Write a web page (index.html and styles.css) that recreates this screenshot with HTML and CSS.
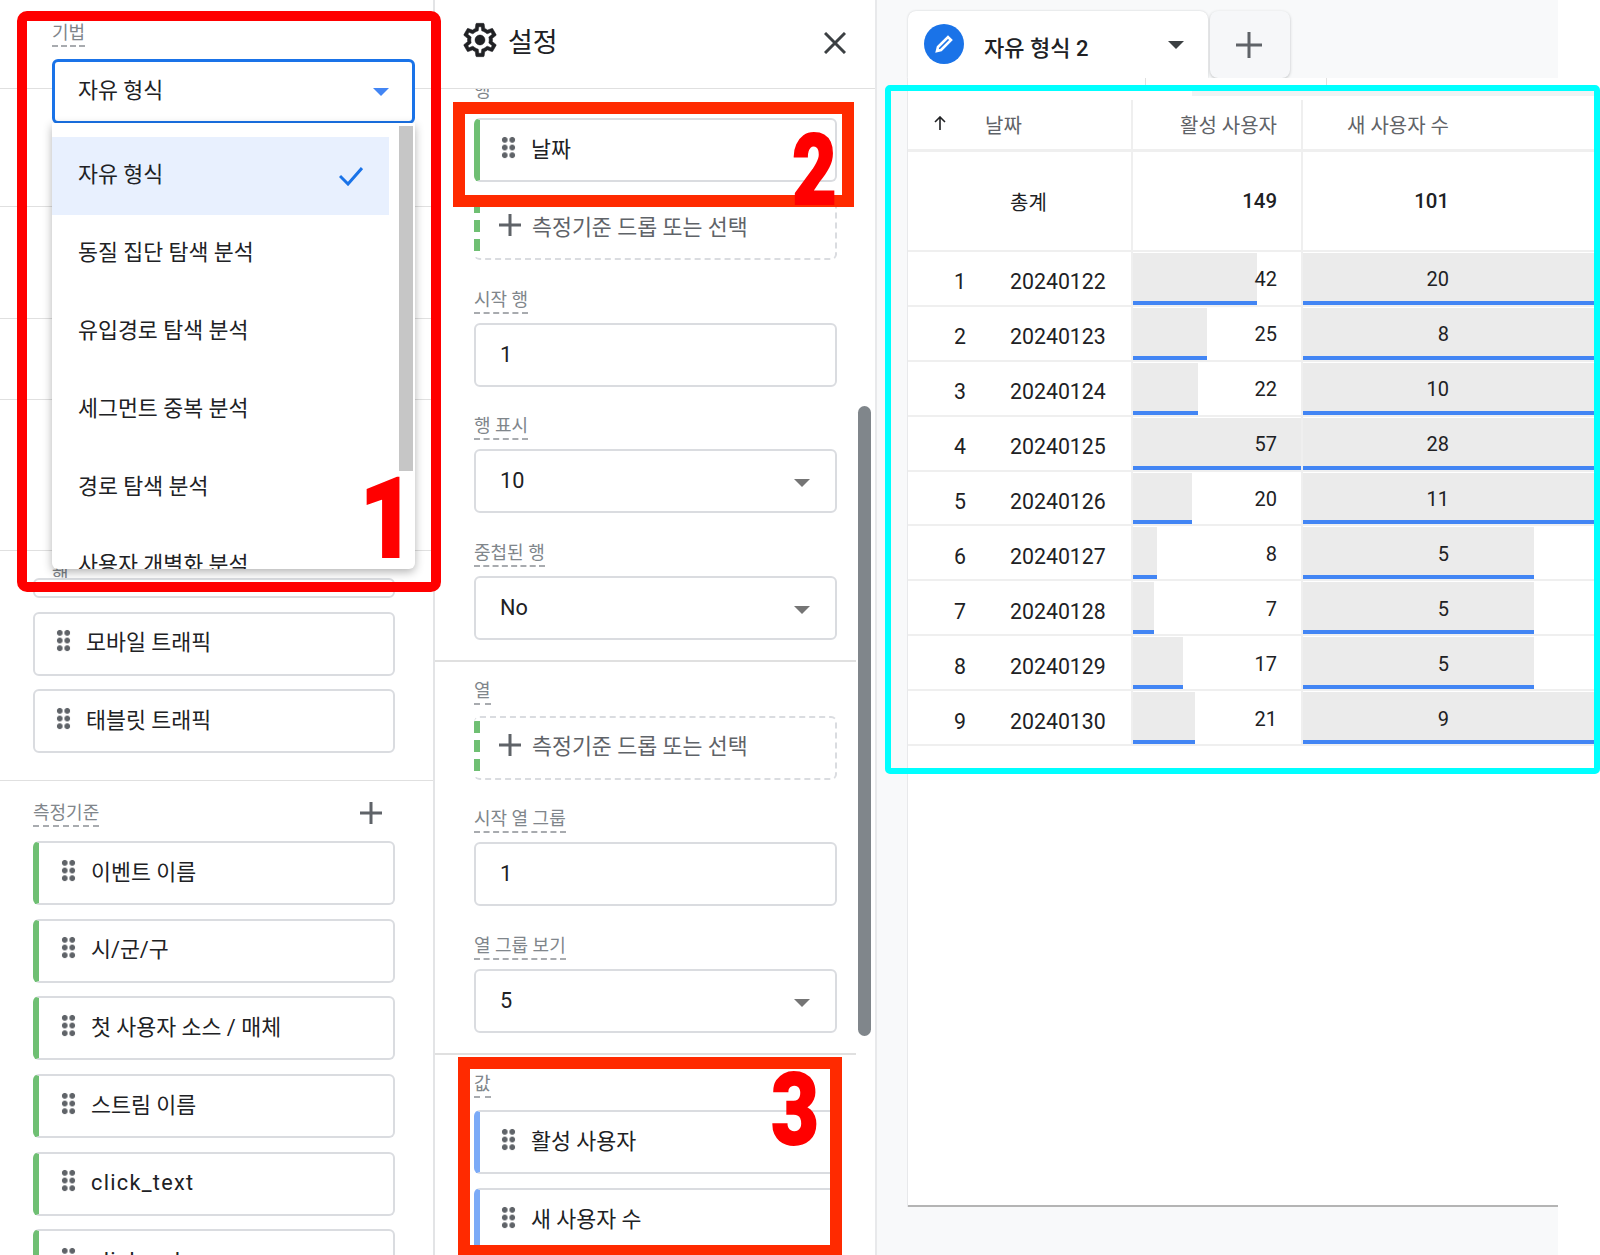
FILE: index.html
```html
<!DOCTYPE html>
<html lang="ko">
  <head>
    <meta charset="UTF-8" />
    <title>자유 형식</title>
    <link rel="stylesheet" href="styles.css">
  </head>
  <body>
    <div class="vars">
      <div class="sec sec-1"></div>
      <div class="sec sec-2"></div>
      <div class="sec sec-3"></div>
      <div class="sec sec-4"></div>
      <div class="sec sec-5"></div>
      <div class="sec sec-rows">
        <div class="lbl under">행</div>
        <div class="chips">
          <div class="chip chip-cut"></div>
          <div class="chip"><i class="dots"></i>모바일 트래픽</div>
          <div class="chip"><i class="dots"></i>태블릿 트래픽</div>
        </div>
      </div>
      <div class="sec-metrics">
        <div class="metrics-head">
          <span class="lbl">측정기준</span>
          <svg class="plus-sm" viewBox="0 0 22 22"><path d="M11 0v22M0 11h22" /></svg>
        </div>
        <div class="chips">
          <div class="chip green"><i class="dots"></i>이벤트 이름</div>
          <div class="chip green"><i class="dots"></i>시/군/구</div>
          <div class="chip green"><i class="dots"></i>첫 사용자 소스 / 매체</div>
          <div class="chip green"><i class="dots"></i>스트림 이름</div>
          <div class="chip green latin"><i class="dots"></i>click_text</div>
          <div class="chip green latin"><i class="dots"></i>click_url</div>
        </div>
      </div>

      <div class="picker">
        <div class="lbl">기법</div>
        <div class="select-open">자유 형식<b class="caret blue"></b></div>
        <div class="menu">
          <div class="menu-item on">자유 형식
            <svg class="check" viewBox="0 0 24 20"><path d="M1 10l8 8L23 2" /></svg>
          </div>
          <div class="menu-item">동질 집단 탐색 분석</div>
          <div class="menu-item">유입경로 탐색 분석</div>
          <div class="menu-item">세그먼트 중복 분석</div>
          <div class="menu-item">경로 탐색 분석</div>
          <div class="menu-item">사용자 개별화 분석</div>
          <div class="menu-thumb"></div>
        </div>
      </div>
    </div>

    <div class="settings">
      <div class="set-head">
        <svg class="gear" viewBox="0 0 24 24"><path fill-rule="evenodd" d="M19.43 12.98c.04-.32.07-.64.07-.98s-.03-.66-.07-.98l2.11-1.65c.19-.15.24-.42.12-.64l-2-3.46c-.12-.22-.39-.3-.61-.22l-2.49 1c-.52-.4-1.08-.73-1.69-.98l-.38-2.65C14.46 2.18 14.25 2 14 2h-4c-.25 0-.46.18-.49.42l-.38 2.65c-.61.25-1.17.59-1.69.98l-2.49-1c-.23-.09-.49 0-.61.22l-2 3.46c-.13.22-.07.49.12.64l2.11 1.65c-.04.32-.07.65-.07.98s.03.66.07.98l-2.11 1.65c-.19.15-.24.42-.12.64l2 3.46c.12.22.39.3.61.22l2.49-1c.52.4 1.08.73 1.69.98l.38 2.65c.03.24.24.42.49.42h4c.25 0 .46-.18.49-.42l.38-2.65c.61-.25 1.17-.59 1.69-.98l2.49 1c.23.09.49 0 .61-.22l2-3.46c.12-.22.07-.49-.12-.64l-2.11-1.65zM17.45 11.27c.04.31.05.52.05.73s-.02.43-.05.73l-.14 1.13.89.7 1.08.84-.7 1.21-1.27-.51-1.04-.42-.9.68c-.43.32-.84.56-1.25.73l-1.06.43-.16 1.13-.2 1.35h-1.4l-.19-1.35-.16-1.13-1.06-.43c-.43-.18-.83-.41-1.23-.71l-.91-.7-1.06.43-1.27.51-.7-1.21 1.08-.84.89-.7-.14-1.13c-.03-.31-.05-.54-.05-.74s.02-.43.05-.73l.14-1.13-.89-.7-1.08-.84.7-1.21 1.27.51 1.04.42.9-.68c.43-.32.84-.56 1.25-.73l1.06-.43.16-1.13.2-1.35h1.39l.19 1.35.16 1.13 1.06.43c.43.18.83.41 1.23.71l.91.7 1.06-.43 1.27-.51.7 1.21-1.07.85-.89.7.14 1.13zM12 9c-1.66 0-3 1.34-3 3s1.34 3 3 3 3-1.34 3-3-1.34-3-3-3z" /></svg>
        <span class="set-title">설정</span>
        <svg class="close" viewBox="0 0 22 22"><path d="M1 1l20 20M21 1L1 21" /></svg>
      </div>
      <div class="set-body">
        <div class="lbl clip">행</div>
        <div class="chip green"><i class="dots"></i>날짜</div>
        <div class="drop"><svg class="plus" viewBox="0 0 22 22"><path d="M11 0v22M0 11h22" /></svg>측정기준 드롭 또는 선택</div>
        <div class="lbl field-lbl">시작 행</div>
        <div class="field">1</div>
        <div class="lbl field-lbl">행 표시</div>
        <div class="field">10<b class="caret"></b></div>
        <div class="lbl field-lbl">중첩된 행</div>
        <div class="field">No<b class="caret"></b></div>
        <div class="rule rule-a"></div>
        <div class="lbl short">열</div>
        <div class="drop"><svg class="plus" viewBox="0 0 22 22"><path d="M11 0v22M0 11h22" /></svg>측정기준 드롭 또는 선택</div>
        <div class="lbl field-lbl">시작 열 그룹</div>
        <div class="field">1</div>
        <div class="lbl field-lbl">열 그룹 보기</div>
        <div class="field">5<b class="caret"></b></div>
        <div class="rule rule-b"></div>
        <div class="lbl val-lbl">값</div>
        <div class="chip blue"><i class="dots"></i>활성 사용자</div>
        <div class="chip blue"><i class="dots"></i>새 사용자 수</div>
      </div>
      <div class="set-thumb"></div>
    </div>

    <div class="report">
      <div class="tabs">
        <div class="tab">
          <span class="pen"><svg viewBox="0 0 24 24"><path d="M5 19l1-4L16 5l3 3L9 18z" /></svg></span>
          <span class="tab-name">자유 형식 2</span>
          <b class="caret dark"></b>
        </div>
        <div class="tab-add"><svg viewBox="0 0 26 26"><path d="M13 0v26M0 13h26" /></svg></div>
      </div>
      <div class="card">
        <div class="strip"></div>
        <div class="tbl">
          <div class="row head">
            <div class="c-idx"><svg class="up" viewBox="0 0 12 14"><path d="M6 14V1M1 6l5-5 5 5" /></svg></div>
            <div class="c-date">날짜</div>
            <div class="c-a">활성 사용자</div>
            <div class="c-b">새 사용자 수</div>
          </div>
          <div class="row total">
            <div class="c-idx"></div>
            <div class="c-date">총계</div>
            <div class="c-a">149</div>
            <div class="c-b">101</div>
          </div>
          <div class="row data">
            <div class="c-idx">1</div><div class="c-date">20240122</div>
            <div class="c-a"><i class="bar" style="width:73.7%"></i><span>42</span></div>
            <div class="c-b"><i class="bar" style="width:100%"></i><span>20</span></div>
          </div>
          <div class="row data">
            <div class="c-idx">2</div><div class="c-date">20240123</div>
            <div class="c-a"><i class="bar" style="width:43.9%"></i><span>25</span></div>
            <div class="c-b"><i class="bar" style="width:100%"></i><span>8</span></div>
          </div>
          <div class="row data">
            <div class="c-idx">3</div><div class="c-date">20240124</div>
            <div class="c-a"><i class="bar" style="width:38.6%"></i><span>22</span></div>
            <div class="c-b"><i class="bar" style="width:100%"></i><span>10</span></div>
          </div>
          <div class="row data">
            <div class="c-idx">4</div><div class="c-date">20240125</div>
            <div class="c-a"><i class="bar" style="width:100%"></i><span>57</span></div>
            <div class="c-b"><i class="bar" style="width:100%"></i><span>28</span></div>
          </div>
          <div class="row data">
            <div class="c-idx">5</div><div class="c-date">20240126</div>
            <div class="c-a"><i class="bar" style="width:35.1%"></i><span>20</span></div>
            <div class="c-b"><i class="bar" style="width:100%"></i><span>11</span></div>
          </div>
          <div class="row data">
            <div class="c-idx">6</div><div class="c-date">20240127</div>
            <div class="c-a"><i class="bar" style="width:14%"></i><span>8</span></div>
            <div class="c-b"><i class="bar" style="width:77.7%"></i><span>5</span></div>
          </div>
          <div class="row data">
            <div class="c-idx">7</div><div class="c-date">20240128</div>
            <div class="c-a"><i class="bar" style="width:12.3%"></i><span>7</span></div>
            <div class="c-b"><i class="bar" style="width:77.7%"></i><span>5</span></div>
          </div>
          <div class="row data">
            <div class="c-idx">8</div><div class="c-date">20240129</div>
            <div class="c-a"><i class="bar" style="width:29.8%"></i><span>17</span></div>
            <div class="c-b"><i class="bar" style="width:77.7%"></i><span>5</span></div>
          </div>
          <div class="row data">
            <div class="c-idx">9</div><div class="c-date">20240130</div>
            <div class="c-a"><i class="bar" style="width:36.8%"></i><span>21</span></div>
            <div class="c-b"><i class="bar" style="width:100%"></i><span>9</span></div>
          </div>
        </div>
      </div>
    </div>

    <!-- 주석 박스 -->
    <div class="mark mark-1"></div>
    <div class="mark-2"></div>
    <div class="mark-3"></div>
    <div class="mark-t"></div>
    <span class="num num-1">1</span>
    <span class="num num-2">2</span>
    <span class="num num-3">3</span>
  </body>
</html>
```

FILE: styles.css
```css
* {
  box-sizing: border-box;
}
html,
body {
  margin: 0;
  height: 100%;
}
body {
  position: relative;
  width: 1600px;
  height: 1255px;
  overflow: hidden;
  display: flex;
  background: #fff;
  color: #202124;
  font-family: Roboto, "Noto Sans CJK KR", sans-serif;
  font-size: 21.7px;
}

/* 왼쪽 패널 */
.vars {
  position: relative;
  width: 435px;
  flex: none;
  border-right: 2px solid #e3e4e6;
}
.sec {
  border-bottom: 1px solid #e0e0e0;
}
.sec-1 {
  height: 89px;
}
.sec-2 {
  height: 118px;
}
.sec-3 {
  height: 112px;
}
.sec-4 {
  height: 81px;
}
.sec-5 {
  height: 151px;
}
.sec-rows {
  height: 230px;
  padding: 15px 0 0 52px;
}
.sec-rows .chips {
  margin: -13px 0 0 -19px;
}
.sec-rows .chip-cut {
  height: 20px;
  padding: 0;
}
.under {
  border: 0;
}
.sec-metrics {
  padding: 0 38px 0 33px;
}
.metrics-head {
  display: flex;
  justify-content: space-between;
  align-items: center;
  height: 60px;
  padding-right: 13px;
}
.metrics-head .lbl {
  margin-top: 6px;
}
.chips {
  display: flex;
  flex-direction: column;
  gap: 13.7px;
}
.lbl {
  display: table;
  font-size: 18px;
  line-height: 22px;
  color: #80868b;
  border-bottom: 2px dashed #a8abaf;
  padding-bottom: 1px;
}
.chip {
  display: flex;
  align-items: center;
  flex: none;
  width: 362px;
  height: 64px;
  padding: 0 0 6px 21px;
  border: 2px solid #dadce0;
  border-radius: 6px;
  background: #fff;
}
.chip.green {
  border-left: 6px solid #6fbf73;
  padding-left: 22px;
}
.chip.blue {
  border-left: 6px solid #7baaf7;
  padding-left: 22px;
}
.latin {
  letter-spacing: 1.3px;
  padding-bottom: 2px;
}
.latin .dots {
  margin-top: -4px;
}
.dots {
  display: block;
  flex: none;
  width: 15px;
  height: 23px;
  margin-right: 15px;
  background-image: radial-gradient(circle at center, #5f6368 2.6px, transparent 3.1px);
  background-size: 7.5px 7.7px;
}

/* 기법 드롭다운 */
.picker {
  position: absolute;
  left: 52px;
  top: 22px;
  width: 363px;
}
.picker .lbl {
  margin-bottom: 12px;
}
.select-open {
  position: relative;
  height: 65px;
  display: flex;
  align-items: center;
  padding: 0 0 6px 23px;
  border: 3px solid #1a73e8;
  border-radius: 6px;
  background: #fff;
}
.caret {
  position: absolute;
  right: 24px;
  top: 50%;
  margin-top: -2px;
  border-top: 8px solid #757575;
  border-left: 8px solid transparent;
  border-right: 8px solid transparent;
}
.caret.blue {
  border-top-color: #4285f4;
  margin-top: -4px;
  right: 23px;
}
.menu {
  position: relative;
  height: 446px;
  margin-top: -1px;
  padding-top: 14px;
  overflow: hidden;
  background: #fff;
  border-radius: 0 0 6px 6px;
  box-shadow: 0 3px 10px rgba(0, 0, 0, 0.3);
}
.menu-item {
  position: relative;
  display: flex;
  align-items: center;
  flex: none;
  width: 337px;
  height: 78px;
  padding: 0 0 7px 26px;
}
.menu-item.on {
  background: #e8f0fe;
}
.check {
  position: absolute;
  right: 26px;
  top: 29px;
  width: 24px;
  height: 20px;
  fill: none;
  stroke: #1a73e8;
  stroke-width: 3;
}
.menu-thumb {
  position: absolute;
  right: 2px;
  top: 3px;
  width: 14px;
  height: 345px;
  background: #c6c6c6;
}
.plus-sm,
.plus,
.tab-add svg {
  fill: none;
  stroke: #5f6368;
  stroke-width: 3;
}
.plus-sm {
  width: 22px;
  height: 22px;
  margin-top: 4px;
}

/* 설정 패널 */
.settings {
  position: relative;
  width: 442px;
  flex: none;
  border-right: 2px solid #e8e9eb;
}
.set-head {
  display: flex;
  align-items: center;
  height: 89px;
  padding: 0 29px 8px 25px;
  border-bottom: 1px solid #e0e0e0;
}
.gear {
  width: 40px;
  height: 40px;
  margin-right: 8px;
  fill: #202124;
  stroke: #202124;
  stroke-width: 0.3;
}
.set-title {
  font-size: 27px;
  flex: 1;
}
.close {
  width: 22px;
  height: 22px;
  margin-top: 6px;
  fill: none;
  stroke: #3c4043;
  stroke-width: 3;
}
.set-body {
  height: 1166px;
  padding-left: 39px;
  overflow: hidden;
}
.set-body .chip {
  width: 363px;
  padding-left: 21px;
}
.set-body .chip.blue {
  padding-bottom: 4px;
}
.clip {
  margin-top: -9px;
  height: 29px;
  border: 0;
}
.set-body > .clip + .chip {
  margin-top: 9px;
}
.drop {
  display: flex;
  align-items: center;
  width: 363px;
  height: 64px;
  margin-top: 14px;
  padding: 0 0 6px 25px;
  color: #5f6368;
  border: 2px dashed #dadce0;
  border-left: 0;
  border-radius: 6px;
  background-image: linear-gradient(#6fbf73 63%, transparent 63%);
  background-size: 6px 19px;
  background-repeat: repeat-y;
  background-position: 0 3px;
}
.short + .drop {
  margin-top: 11px;
}
.plus {
  width: 22px;
  height: 22px;
  margin-right: 11px;
}
.field-lbl {
  margin-top: 28.5px;
  margin-bottom: 9px;
}
.field {
  position: relative;
  display: flex;
  align-items: center;
  width: 363px;
  height: 64px;
  padding: 0 0 1px 24px;
  border: 2px solid #dadce0;
  border-radius: 6px;
}
.field .caret {
  right: 25px;
}
.rule {
  width: 421px;
  margin-left: -39px;
  border-bottom: 2px solid #e0e0e0;
}
.rule-a {
  margin-top: 20px;
}
.rule-b {
  margin-top: 20px;
}
.short {
  margin-top: 18px;
}
.val-lbl {
  margin-top: 18px;
  margin-bottom: 12px;
}
.set-body > .chip.blue + .chip.blue {
  margin-top: 14px;
}
.set-thumb {
  position: absolute;
  right: 4px;
  top: 406px;
  width: 13px;
  height: 630px;
  border-radius: 7px;
  background: #80868b;
}

/* 리포트 */
.report {
  flex: 1;
  padding-left: 31px;
  background: #f8f9fa;
  border-right: 42px solid #fff;
  position: relative;
}
.tabs {
  display: flex;
  gap: 2px;
  height: 78px;
  padding-top: 11px;
}
.tab {
  position: relative;
  display: flex;
  align-items: center;
  width: 300px;
  padding: 0 0 0 16px;
  border-radius: 8px 8px 0 0;
  background: #fff;
  box-shadow: 0 0 2px rgba(60, 64, 67, 0.25);
}
.pen {
  display: flex;
  align-items: center;
  justify-content: center;
  width: 40px;
  height: 40px;
  margin: -2px 20px 0 0;
  border-radius: 50%;
  background: #1a73e8;
}
.pen svg {
  width: 24px;
  height: 24px;
  fill: none;
  stroke: #fff;
  stroke-width: 2.6;
}
.tab-name {
  font-size: 22px;
  font-weight: 500;
  margin-top: 2px;
}
.caret.dark {
  right: 24px;
  top: 30px;
  margin: 0;
  border-top-color: #3c4043;
}
.tab-add {
  display: flex;
  align-items: center;
  justify-content: center;
  width: 80px;
  padding-right: 3px;
  border-radius: 8px;
  background: #f6f7f9;
  box-shadow: 0 1px 3px rgba(60, 64, 67, 0.3);
}
.tab-add svg {
  width: 26px;
  height: 26px;
}
.card {
  position: relative;
  width: 650px;
  height: 1129px;
  background: #fff;
  border-bottom: 2px solid #b4b4b4;
  box-shadow: -1px 0 0 #e8e9eb;
}
.strip {
  width: 692px;
  height: 18px;
  background:
    linear-gradient(#e0e0e0, #e0e0e0) 237px 0 / 1px 7px no-repeat,
    linear-gradient(#e0e0e0, #e0e0e0) 418px 0 / 1px 7px no-repeat,
    linear-gradient(#f1f3f4, #f1f3f4) 284px 13px / 100% 5px no-repeat;
}
.tbl {
  width: 692px;
  font-size: 20px;
}
.row {
  display: grid;
  grid-template-columns: 58px 167px 170px 1fr;
  position: relative;
  border-bottom: 2px solid #efefef;
}
.row > div {
  position: relative;
  display: flex;
  align-items: center;
}
.c-idx {
  justify-content: flex-end;
}
.c-date {
  padding-left: 44px;
  border-right: 2px solid #efefef;
}
.c-a {
  justify-content: flex-end;
  padding-right: 24px;
  border-right: 2px solid #efefef;
}
.c-b {
  justify-content: flex-end;
  padding-right: 151px;
}
.head {
  height: 56px;
  padding-top: 4px;
  color: #5f6368;
  border-bottom-width: 3px;
}
.head .c-date {
  padding-left: 19px;
}
.up {
  width: 12px;
  height: 14px;
  margin: -4px 20px 0 0;
  fill: none;
  stroke: #202124;
  stroke-width: 1.6;
}
.total {
  height: 100px;
  font-weight: 500;
  font-size: 20.4px;
}
.total .c-date {
  font-weight: 400;
  font-size: 20px;
}
.data {
  height: 54.9px;
}
.data .c-idx,
.data .c-date {
  padding-top: 7px;
  font-size: 21.3px;
}
.data > div > span {
  position: relative;
  top: 1px;
}
.bar {
  position: absolute;
  left: 0;
  top: 1px;
  bottom: 0;
  background: #ebebeb;
  border-bottom: 4px solid #4285f4;
}

/* 빨간 표시 */
.mark {
  position: absolute;
  left: 17px;
  top: 11px;
  width: 424px;
  height: 581px;
  border: 10px solid #ff0000;
  border-radius: 10px;
}
.mark-2 {
  position: absolute;
  left: 453px;
  top: 102px;
  width: 401px;
  height: 105px;
  border: 12px solid #ff2a00;
}
.mark-3 {
  position: absolute;
  left: 458px;
  top: 1057px;
  width: 384px;
  height: 198px;
  border: 12px solid #ff2a00;
  border-bottom-width: 10px;
}
.mark-t {
  position: absolute;
  left: 885px;
  top: 85px;
  width: 715px;
  height: 689px;
  border: 6px solid #00ffff;
  border-radius: 5px;
}
.num {
  position: absolute;
  font-family: Roboto, sans-serif;
  font-weight: 900;
  color: #ff0000;
  -webkit-text-stroke: 2px #ff0000;
  line-height: 1;
}
.num-1 {
  left: 355px;
  top: 463px;
  font-size: 112px;
  transform: scaleX(0.85);
}
.num-2 {
  left: 786px;
  top: 122px;
  font-size: 98px;
  transform: scaleX(0.78);
}
.num-3 {
  left: 766px;
  top: 1060px;
  font-size: 100px;
  transform: scaleX(0.82);
}
```
